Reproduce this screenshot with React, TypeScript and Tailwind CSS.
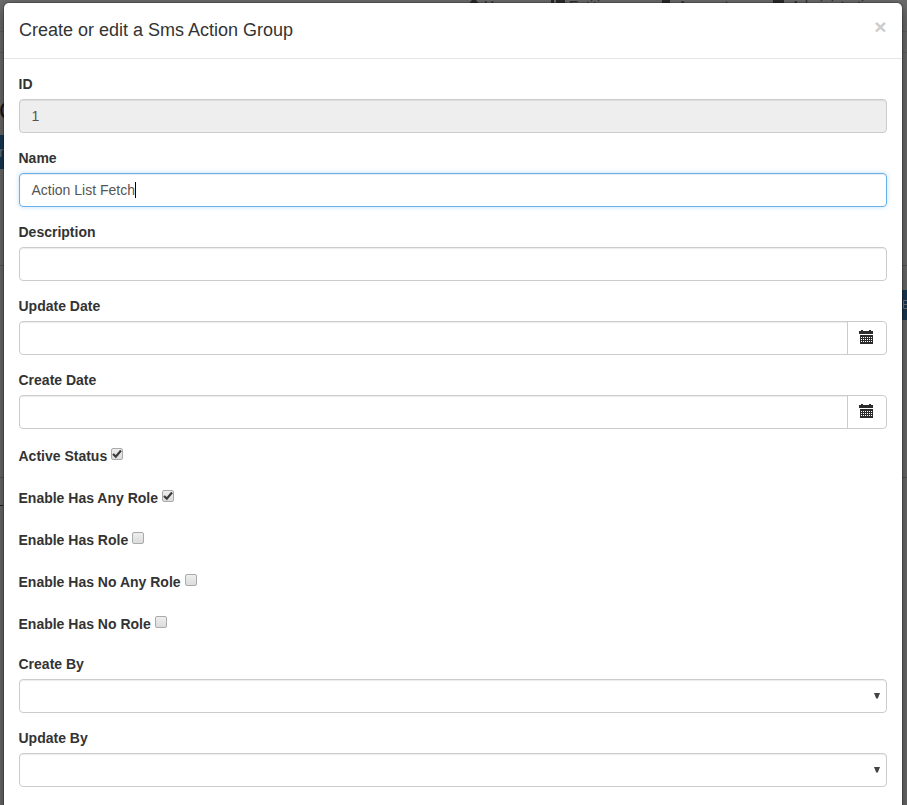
import type { ReactNode } from "react";

const inputBase =
  "block h-[34px] w-full rounded border border-[#ccc] px-[11.5px] py-1.5 text-[14px] leading-5 text-[#555] shadow-[inset_0_1px_1px_rgba(0,0,0,0.075)]";

function Field({ label, children }: { label: string; children: ReactNode }) {
  return (
    <div className="mb-[15px]">
      <div className="mb-[5px] -ml-[0.5px] h-5 text-[14px] leading-5 font-bold">{label}</div>
      {children}
    </div>
  );
}

function CalendarIcon() {
  return (
    <svg width="14" height="14" viewBox="0 0 14 14" shapeRendering="crispEdges">
      <path fill="#2b2b2b" d="M0 1h2V0h2v1h6V0h2v1h2v3H0zM1 5h13v9H1z" />
      <path
        stroke="#fff"
        strokeWidth="1"
        strokeDasharray="1 1"
        d="M2 7.5h11M2 9.5h11M2 11.5h11"
      />
    </svg>
  );
}

function DateField({ label }: { label: string }) {
  return (
    <Field label={label}>
      <div className="flex h-[34px] overflow-hidden rounded border border-[#ccc]">
        <div className="flex-1 shadow-[inset_0_1px_1px_rgba(0,0,0,0.075)]" />
        <div className="flex w-[39px] items-center border-l border-[#ccc] pb-0.5 pl-[11px]">
          <CalendarIcon />
        </div>
      </div>
    </Field>
  );
}

function CheckField({ label, checked = false }: { label: string; checked?: boolean }) {
  return (
    <div className="mb-[15px] -ml-[0.5px] flex h-[27px] items-start">
      <span className="pt-[2px] text-[14px] leading-5 font-bold">{label}</span>
      <span className="mt-1 ml-1 flex h-3 w-3 items-center justify-center rounded-[2px] border border-[#aaa] bg-linear-to-b from-[#eee] to-[#dcdcdc]">
        {checked && (
          <svg width="10" height="10" viewBox="0 0 10 10" fill="none" stroke="#3c3c3c" strokeWidth="2.2">
            <path d="M1 5l2.8 2.6L9 1.5" />
          </svg>
        )}
      </span>
    </div>
  );
}

function SelectField({ label }: { label: string }) {
  return (
    <Field label={label}>
      <div className="flex h-[34px] items-center justify-end rounded border border-[#ccc] pr-1.5 shadow-[inset_0_1px_1px_rgba(0,0,0,0.075)]">
        <svg width="6" height="6" viewBox="0 0 6 6" fill="#444">
          <path d="M0 0h6L3.8 5.6H2.2z" />
        </svg>
      </div>
    </Field>
  );
}

function Backdrop() {
  return (
    <div className="flex h-[805px] w-[907px] flex-col bg-[#6e6e6e]">
      <nav className="flex h-8 items-start border-b border-[#626262] pl-[467px] text-[14px] leading-[12px] text-[#303030]">
        <div className="flex w-[84px] gap-[3px]">
          <svg width="14" height="12" viewBox="0 0 14 12" fill="#2c2c2c">
            <path d="M1 5L5 0h4l4 5v7H1z" />
          </svg>
          <span>Home</span>
        </div>
        <div className="flex w-[111px] gap-1">
          <svg width="14" height="10" viewBox="0 0 14 10" fill="#2c2c2c">
            <path d="M0 0h3v10H0zM5 0h9v10H5z" />
          </svg>
          <span>Entities</span>
        </div>
        <div className="flex w-[111px] gap-2">
          <svg width="8" height="10" viewBox="0 0 8 10" fill="#2c2c2c">
            <path d="M0 0h8v10H0z" />
          </svg>
          <span>Account</span>
        </div>
        <div className="flex gap-[7px]">
          <svg width="11" height="10" viewBox="0 0 11 10" fill="#2c2c2c">
            <path d="M0 0h11v10H0z" />
          </svg>
          <span>Administration</span>
        </div>
      </nav>
      <div className="h-[21px] border-b border-[#626262]" />
      <div className="flex h-[213px] flex-col items-start border-b border-[#585858] pt-[41px]">
        <div className="-ml-px h-[41px] text-[24px] leading-[34px] text-[#181818]">C</div>
        <div className="h-[34px] w-[5px] bg-[#193a57]">
          <div className="-ml-px text-[14px] leading-[34px] text-[#777]">n</div>
        </div>
      </div>
      <div className="flex h-[212px] justify-end border-b border-[#585858] pt-6">
        <div className="h-[30px] w-[5px] bg-[#193a57] pl-px">
          <svg width="4" height="30" viewBox="0 0 4 30" fill="none" stroke="#777">
            <path d="M4 10.5H.5v8H4M.5 14.5H4" />
          </svg>
        </div>
      </div>
      <div className="mt-[27px] h-px w-[3px] bg-[#222]" />
    </div>
  );
}

export default function App() {
  return (
    <div className="relative h-[805px] w-[907px] overflow-hidden font-['Liberation_Sans',Arial,sans-serif] text-[#333]">
      <Backdrop />
      <div className="absolute top-[3px] left-1 h-[820px] w-[898px] rounded-[5px] bg-white shadow-[0_0_0_1px_rgba(0,0,0,0.2),0_4px_15px_rgba(0,0,0,0.5)]">
        <div className="flex h-14 justify-between border-b border-[#e5e5e5] px-[15px] pt-[14px]">
          <h4 className="text-[18px] leading-[26px]">Create or edit a Sms Action Group</h4>
          <span className="-mt-px mr-[0.5px] text-[21px] leading-[21px] font-bold text-[#ccc]">×</span>
        </div>
        <div className="p-[15px]">
          <Field label="ID">
            <div className={`${inputBase} bg-[#eee]`}>1</div>
          </Field>
          <Field label="Name">
            <div className="flex h-[34px] items-center rounded border border-[#66afe9] px-[11.5px] text-[14px] leading-5 text-[#555] shadow-[inset_0_1px_1px_rgba(0,0,0,0.075),0_0_5px_rgba(102,175,233,0.4)]">
              Action List Fetch
              <span className="ml-[0.2px] h-4 w-px bg-black" />
            </div>
          </Field>
          <Field label="Description">
            <div className={inputBase} />
          </Field>
          <DateField label="Update Date" />
          <DateField label="Create Date" />
          <CheckField label="Active Status" checked />
          <CheckField label="Enable Has Any Role" checked />
          <CheckField label="Enable Has Role" />
          <CheckField label="Enable Has No Any Role" />
          <CheckField label="Enable Has No Role" />
          <SelectField label="Create By" />
          <SelectField label="Update By" />
        </div>
      </div>
    </div>
  );
}
